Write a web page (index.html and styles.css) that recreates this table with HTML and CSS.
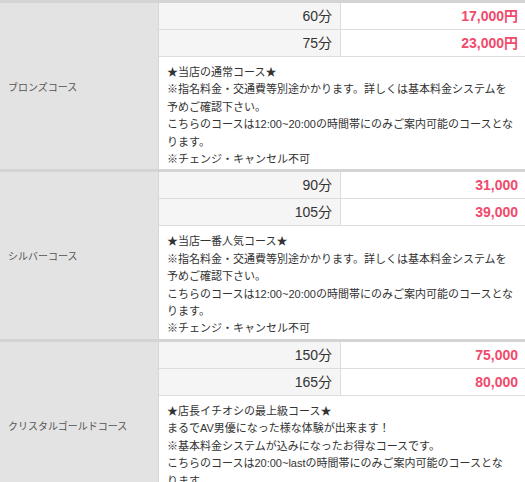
FILE: index.html
```html
<!DOCTYPE html>
<html lang="ja">
<head>
<meta charset="utf-8">
<link rel="stylesheet" href="styles.css">
</head>
<body>
<div class="table">
  <section class="course">
    <div class="label">ブロンズコース</div>
    <div class="detail">
      <div class="row"><div class="time">60分</div><div class="price">17,000円</div></div>
      <div class="row"><div class="time">75分</div><div class="price">23,000円</div></div>
      <div class="desc">★当店の通常コース★<br>※指名料金・交通費等別途かかります。詳しくは基本料金システムを<br>予めご確認下さい。<br>こちらのコースは12:00~20:00の時間帯にのみご案内可能のコースとな<br>ります。<br>※チェンジ・キャンセル不可</div>
    </div>
  </section>
  <section class="course">
    <div class="label">シルバーコース</div>
    <div class="detail">
      <div class="row"><div class="time">90分</div><div class="price">31,000</div></div>
      <div class="row"><div class="time">105分</div><div class="price">39,000</div></div>
      <div class="desc">★当店一番人気コース★<br>※指名料金・交通費等別途かかります。詳しくは基本料金システムを<br>予めご確認下さい。<br>こちらのコースは12:00~20:00の時間帯にのみご案内可能のコースとな<br>ります。<br>※チェンジ・キャンセル不可</div>
    </div>
  </section>
  <section class="course">
    <div class="label">クリスタルゴールドコース</div>
    <div class="detail">
      <div class="row"><div class="time">150分</div><div class="price">75,000</div></div>
      <div class="row"><div class="time">165分</div><div class="price">80,000</div></div>
      <div class="desc">★店長イチオシの最上級コース★<br>まるでAV男優になった様な体験が出来ます！<br>※基本料金システムが込みになったお得なコースです。<br>こちらのコースは20:00~lastの時間帯にのみご案内可能のコースとな<br>ります。<br>※チェンジ・キャンセル不可</div>
    </div>
  </section>
</div>
</body>
</html>
```

FILE: styles.css
```css
html, body {
  margin: 0;
  padding: 0;
  background: #ffffff;
}
body {
  font-family: "Liberation Sans", "Noto Sans CJK JP", sans-serif;
  color: #333333;
}
.table {
  width: 525px;
}
.course {
  display: flex;
  border-top: 3px solid #d4d4d4;
}
.label {
  width: 159px;
  flex: none;
  background: #e3e3e3;
  border-right: 1px solid #d6d6d6;
  display: flex;
  align-items: center;
  padding-left: 8px;
  box-sizing: border-box;
  font-size: 10px;
  color: #555555;
}
.detail {
  flex: 1;
  min-width: 0;
}
.row {
  display: flex;
  height: 27px;
  border-bottom: 1px solid #dddddd;
  box-sizing: border-box;
}
.time {
  width: 182px;
  flex: none;
  background: #f5f5f5;
  border-right: 1px solid #dddddd;
  text-align: right;
  padding-right: 8px;
  box-sizing: border-box;
  font-size: 14px;
  line-height: 26px;
  color: #333333;
}
.price {
  flex: 1;
  text-align: right;
  padding-right: 7px;
  font-size: 14px;
  font-weight: bold;
  line-height: 26px;
  color: #f04a6c;
}
.desc {
  padding: 7px 4px 1px 8px;
  font-size: 11px;
  line-height: 17.4px;
  color: #333333;
}
```
